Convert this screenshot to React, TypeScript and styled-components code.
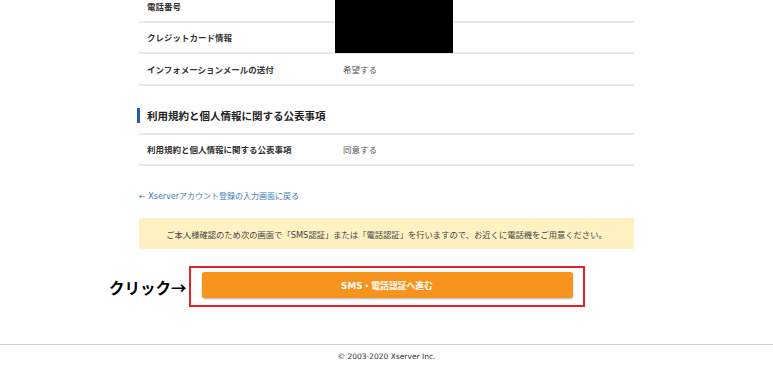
import React from "react";
import styled, { createGlobalStyle } from "styled-components";

const Global = createGlobalStyle`
  html, body { margin: 0; padding: 0; background: #fff; }
  body {
    font-family: "DejaVu Sans", "Noto Sans CJK JP", sans-serif;
    color: #333;
    overflow: hidden;
  }
`;

const Page = styled.div`
  width: 773px;
  height: 367px;
  display: flex;
  flex-direction: column;
  overflow: hidden;
`;

const Main = styled.main`
  width: 495px;
  margin: -9px auto 0;
  display: flex;
  flex-direction: column;
`;

const Table = styled.div<{ $top?: boolean }>`
  position: relative;
  display: flex;
  flex-direction: column;
  border-top: ${(p) => (p.$top ? "2px solid #e8e8e8" : "none")};
`;

const Row = styled.div`
  display: grid;
  grid-template-columns: 196px 1fr;
  height: 29.5px;
  align-items: center;
  border-bottom: 2px solid #e8e8e8;
`;

const Label = styled.div`
  padding-left: 8px;
  font-size: 8.5px;
  font-weight: 700;
  color: #333;
  white-space: nowrap;
`;

const Value = styled.div`
  padding-left: 8px;
  font-size: 8.5px;
  color: #555;
  white-space: nowrap;
`;

const Redact = styled.div`
  position: absolute;
  left: 196px;
  top: 0;
  width: 118px;
  height: 62px;
  background: #000;
`;

const Heading = styled.h2`
  margin: 22px 0 10px -2px;
  height: 15px;
  display: flex;
  align-items: center;
  border-left: 3px solid #1d5fa8;
  padding-left: 7px;
  font-size: 10.5px;
  font-weight: 700;
  color: #222;
`;

const BackLink = styled.a`
  margin-top: 25px;
  font-size: 8px;
  line-height: 12px;
  color: #3c7cc0;
  text-decoration: none;
  white-space: nowrap;
`;

const Notice = styled.div`
  margin-top: 15px;
  height: 31px;
  background: #fff2c2;
  display: flex;
  align-items: center;
  justify-content: center;
  font-size: 8.3px;
  color: #444;
  white-space: nowrap;
`;

const ActionRow = styled.div`
  margin-top: 17px;
  display: flex;
  justify-content: center;
`;

const Highlight = styled.div`
  position: relative;
  width: 396px;
  height: 41px;
  box-sizing: border-box;
  border: 2px solid #e6212a;
  padding: 4px 10px 7px 11px;
  display: flex;
`;

const ClickNote = styled.span`
  position: absolute;
  right: calc(100% + 4px);
  top: 50%;
  transform: translateY(-50%);
  font-family: "Noto Sans CJK JP", sans-serif;
  font-size: 15.5px;
  font-weight: 700;
  color: #000;
  white-space: nowrap;
`;

const Button = styled.button`
  flex: 1;
  border: none;
  border-radius: 3px;
  background: #f7941e;
  box-shadow: 0 1px 2px rgba(0, 0, 0, 0.3);
  color: #fff;
  font-family: "DejaVu Sans", "Noto Sans CJK JP", sans-serif;
  font-size: 8.8px;
  font-weight: 700;
  cursor: pointer;
`;

const Footer = styled.footer`
  margin-top: auto;
  height: 22px;
  border-top: 1px solid #d0d0d0;
  display: flex;
  align-items: center;
  justify-content: center;
  font-size: 7.5px;
  color: #333;
`;

export default function App() {
  return (
    <>
      <Global />
      <Page>
        <Main>
          <Table>
            <Row>
              <Label>電話番号</Label>
              <Value></Value>
            </Row>
            <Row>
              <Label>クレジットカード情報</Label>
              <Value></Value>
            </Row>
            <Row>
              <Label>インフォメーションメールの送付</Label>
              <Value>希望する</Value>
            </Row>
            <Redact />
          </Table>
          <Heading>利用規約と個人情報に関する公表事項</Heading>
          <Table $top>
            <Row>
              <Label>利用規約と個人情報に関する公表事項</Label>
              <Value>同意する</Value>
            </Row>
          </Table>
          <BackLink href="#">← Xserverアカウント登録の入力画面に戻る</BackLink>
          <Notice>
            ご本人様確認のため次の画面で「SMS認証」または「電話認証」を行いますので、お近くに電話機をご用意ください。
          </Notice>
          <ActionRow>
            <Highlight>
              <ClickNote>クリック→</ClickNote>
              <Button>SMS・電話認証へ進む</Button>
            </Highlight>
          </ActionRow>
        </Main>
        <Footer>© 2003-2020 Xserver Inc.</Footer>
      </Page>
    </>
  );
}
